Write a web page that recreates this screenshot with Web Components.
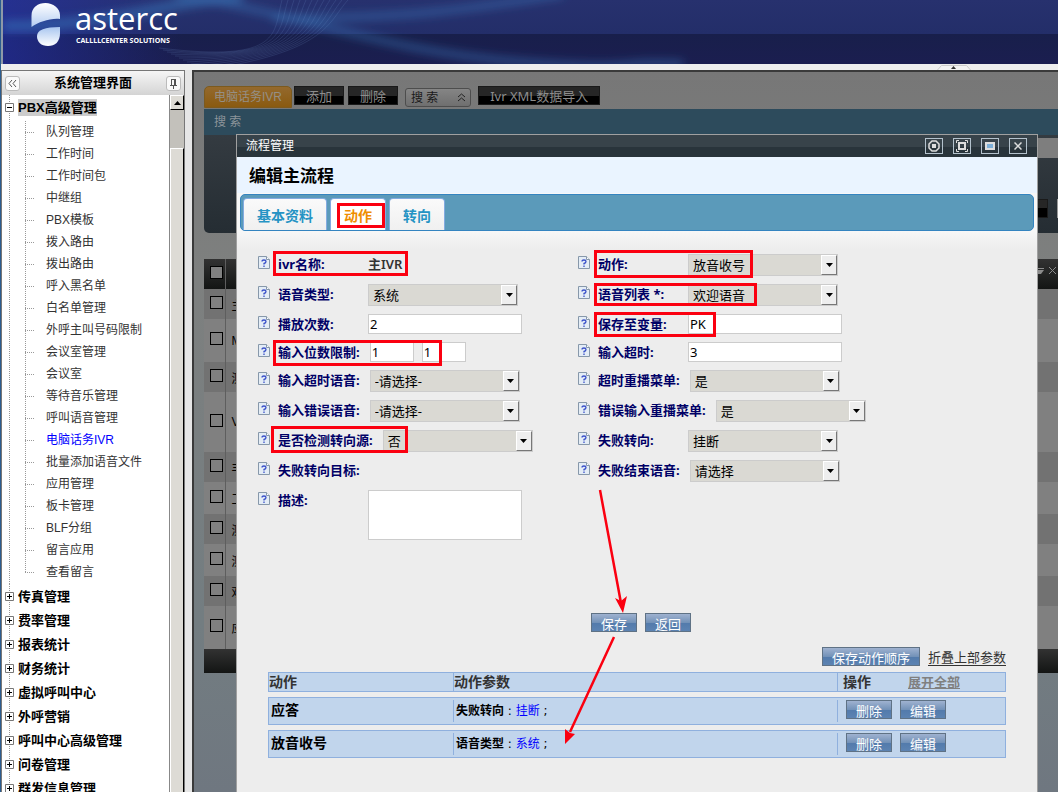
<!DOCTYPE html>
<html lang="zh-CN">
<head>
<meta charset="utf-8">
<title>astercc</title>
<style>
  body {
    margin: 0;
    background: #eeeeee;
    font-family: "Liberation Sans", "Noto Sans CJK SC", sans-serif;
    font-size: 12px;
    color: #333333;
  }
</style>
</head>
<body>
<app-shell>
  <brand-header slot="header"></brand-header>
  <side-menu slot="side" heading="系统管理界面"></side-menu>
  <work-pane slot="main">
    <flow-window heading="流程管理">
      <tab-strip heading="编辑主流程"></tab-strip>
      <flow-form></flow-form>
      <action-list></action-list>
      <mark-layer slot="marks"></mark-layer>
    </flow-window>
  </work-pane>
</app-shell>

<script>
// Attach an open shadow root and fill it from a template
function render(host, html) {
  const template = document.createElement("template");
  template.innerHTML = html;
  host.attachShadow({ mode: "open" });
  host.shadowRoot.appendChild(template.content.cloneNode(true));
}

class AppShell extends HTMLElement {
  constructor() {
    super();
    render(this, `
      <style>
        :host {
          display: flex;
          flex-direction: column;
          height: 100vh;
          box-sizing: border-box;
          border-left: 1px solid #2b5c8f;
          overflow: hidden;
        }
        .strip {
          display: flex;
          justify-content: flex-end;
          height: 6px;
          padding-right: 87px;
        }
        .strip button {
          border: 0;
          padding: 0;
          background: none;
          height: 6px;
          display: flex;
        }
        .body {
          flex: 1;
          min-height: 0;
          display: grid;
          grid-template-columns: 184px minmax(0, 1fr);
          gap: 7px;
          background: #e6e6e6;
        }
      </style>
      <slot name="header"></slot>
      <div class="strip">
        <button aria-label="toggle header">
          <svg width="34" height="6"><path d="M0.5 6L4.5 1.500H29.500L33.500 6" fill="#f3f3f3" stroke="#cccccc"/><path d="M14 5h5l-2.500-3z" fill="#333333"/></svg>
        </button>
      </div>
      <div class="body">
        <slot name="side"></slot>
        <slot name="main"></slot>
      </div>
    `);
  }
}

class BrandHeader extends HTMLElement {
  constructor() {
    super();
    // fine lines that fan out behind the logo
    let lines = "";
    for (let i = 0; i < 12; i++) {
      lines += `<path d="M${345 - i * 6} 0C${325 - i * 5} ${22 + i} ${325 - i * 4} ${52 + i} ${200 - i * 4} ${70 - i * 2}"/>`;
    }
    render(this, `
      <style>
        :host {
          display: grid;
          height: 64px;
          border-left: 2px solid #8e99a8;
          box-sizing: border-box;
          background: linear-gradient(#27316e 0, #232e69 34px, #181f4b 34px, #1b1e50 64px);
          overflow: hidden;
        }
        :host > * { grid-area: 1 / 1; }
        .brand {
          display: flex;
          align-items: flex-start;
          gap: 14px;
          padding: 2px 0 0 28px;
          color: #ffffff;
          font-family: "Open Sans", sans-serif;
        }
        .name { font-size: 31px; line-height: 32px; }
        .tagline { font-size: 7px; line-height: 14px; font-weight: 700; padding-left: 1px; }
      </style>
      <svg width="700" height="64">
        <defs>
          <filter id="soft"><feGaussianBlur stdDeviation="5"/></filter>
          <linearGradient id="left"><stop offset="0" stop-color="#2430a8" stop-opacity=".6"/><stop offset="1" stop-color="#2430a8" stop-opacity="0"/></linearGradient>
        </defs>
        <rect width="180" height="64" fill="url(#left)"/>
        <g fill="none" stroke="#3a7cc0" stroke-opacity=".55" filter="url(#soft)">
          <path d="M0 26C110 26 150 4 240 -4" stroke-width="10"/>
          <path d="M170 -6C300 14 380 52 520 62S600 60 680 64" stroke-width="6"/>
          <path d="M270 18C400 18 450 12 560 -6" stroke-width="6"/>
        </g>
        <g fill="none" stroke="#7f9fdc" stroke-opacity=".16">${lines}</g>
      </svg>
      <div class="brand">
        <svg width="30" height="46" viewBox="0 0 30 46">
          <defs><linearGradient id="g" x2="0" y2="1"><stop offset="0" stop-color="#ffffff"/><stop offset="1" stop-color="#b4cdf2"/></linearGradient>
          <linearGradient id="h" x2="0" y2="1"><stop offset="0" stop-color="#a9c6f0"/><stop offset="1" stop-color="#ffffff"/></linearGradient></defs>
          <path d="M0.500 25V14C0.500 5 7 1 14.500 1S29 6 29 13V17C19 16 8 20 0.500 25z" fill="url(#g)"/>
          <path d="M6 34C6 28 14 25 29 25V31C29 40 24 44 17 44S6 40 6 34z" fill="url(#h)"/>
        </svg>
        <div>
          <div class="name">astercc</div>
          <div class="tagline">CALLLLCENTER SOLUTIONS</div>
        </div>
      </div>
    `);
  }
}

const menuItems = [
  "队列管理", "工作时间", "工作时间包", "中继组", "PBX模板", "拨入路由", "拨出路由",
  "呼入黑名单", "白名单管理", "外呼主叫号码限制", "会议室管理", "会议室", "等待音乐管理",
  "呼叫语音管理", "电脑话务IVR", "批量添加语音文件", "应用管理", "板卡管理", "BLF分组",
  "留言应用", "查看留言"
];
const menuGroups = [
  "传真管理", "费率管理", "报表统计", "财务统计", "虚拟呼叫中心", "外呼营销",
  "呼叫中心高级管理", "问卷管理", "群发信息管理"
];

class SideMenu extends HTMLElement {
  constructor() {
    super();
    const box = (open) => `
      <svg width="9" height="9"><path d="M0.500 0.500h8v8h-8z" fill="#ffffff" stroke="#777777"/><path d="M2 4.500h5${open ? "" : "M4.500 2v5"}" stroke="#000000"/></svg>`;
    const items = menuItems.map((t) =>
      `<li><a href="#"${t === "电脑话务IVR" ? ' class="current"' : ""}>${t}</a></li>`).join("");
    const groups = menuGroups.map((t) => `<div class="group">${box(false)}<b>${t}</b></div>`).join("");
    render(this, `
      <style>
        :host {
          display: flex;
          flex-direction: column;
          min-height: 0;
          border: solid #777777;
          border-width: 1px 1px 0;
          background: #ffffff;
          color: #000000;
        }
        header {
          display: flex;
          align-items: center;
          justify-content: space-between;
          height: 24px;
          padding: 0 3px;
          background: linear-gradient(#f6f6f6, #d4d4d4);
        }
        h2 { margin: 0; font-size: 13px; line-height: 20px; }
        header button {
          width: 15px;
          height: 15px;
          padding: 0;
          border: 1px solid #bbbbbb;
          border-radius: 3px;
          background: #fafafa;
          display: flex;
          align-items: center;
          justify-content: center;
        }
        .body { flex: 1; min-height: 0; display: flex; }
        nav { flex: 1; overflow: hidden; }
        .group {
          display: flex;
          align-items: center;
          height: 24px;
          padding-left: 3px;
          background: repeating-linear-gradient(#999999 0 1px, transparent 1px 2px) 7px 0 / 1px 100% no-repeat;
        }
        .group b { margin-left: 4px; font-size: 13px; line-height: 17px; white-space: nowrap; }
        .open b { background: #cccccc; }
        ul {
          list-style: none;
          margin: 0;
          padding: 2px 0 1px 23px;
          background: repeating-linear-gradient(#999999 0 1px, transparent 1px 2px) 7px 0 / 1px 100% no-repeat;
        }
        li {
          height: 22px;
          display: flex;
          align-items: center;
          padding-left: 21px;
          background:
            repeating-linear-gradient(#999999 0 1px, transparent 1px 2px) 0 0 / 1px 100% no-repeat,
            repeating-linear-gradient(90deg, #999999 0 1px, transparent 1px 2px) 0 11px / 9px 1px no-repeat;
        }
        li:last-child { background-size: 1px 11px, 9px 1px; }
        li a { color: #333333; text-decoration: none; line-height: 18px; white-space: nowrap; }
        li a.current { color: #0000ff; }
        .scroll {
          width: 15px;
          box-sizing: border-box;
          border-left: 1px solid #888888;
          background: #c3c1bb;
          display: flex;
          flex-direction: column;
        }
        .scroll button {
          height: 15px;
          padding: 0;
          background: #dddbd5;
          border: 1px solid;
          border-color: #ffffff #000000 #000000 #ffffff;
          display: flex;
          align-items: center;
          justify-content: center;
        }
        .thumb {
          flex: 1;
          margin-top: 38px;
          background: #dddbd5;
          border: solid;
          border-width: 1px 1px 0 1px;
          border-color: #ffffff #000000 #000000 #ffffff;
        }
      </style>
      <header>
        <button aria-label="collapse"><svg width="9" height="9" fill="none" stroke="#555555"><path d="M4 1L1 4.500L4 8M8 1L5 4.500L8 8"/></svg></button>
        <h2>${this.getAttribute("heading")}</h2>
        <button aria-label="pin"><svg width="9" height="11" fill="none" stroke="#555555"><path d="M2.500 1v6M6.500 1v6M5.500 1v6M2 1.500h5M1 7.500h7M4.500 8v3"/></svg></button>
      </header>
      <div class="body">
        <nav>
          <div class="group open">${box(true)}<b>PBX高级管理</b></div>
          <ul>${items}</ul>
          ${groups}
        </nav>
        <div class="scroll">
          <button aria-label="scroll up"><svg width="7" height="4"><path d="M0 4h7L3.500 0z"/></svg></button>
          <div class="thumb"></div>
        </div>
      </div>
    `);
  }
}

// rows of the dimmed list: first letter of the name, row height
const listRows = [
  ["主", 30], ["M", 43], ["测", 30], ["V", 60], ["丰", 30],
  ["工", 32], ["测", 30], ["测", 32], ["欢", 30], ["应", 43]
];

class WorkPane extends HTMLElement {
  constructor() {
    super();
    const rows = listRows.map(([t, h]) => `
      <tr style="height: ${h}px"><td><input type="checkbox" aria-label="${t}"></td><td>${t}</td></tr>`).join("");
    render(this, `
      <style>
        :host {
          display: block;
          position: relative;
          min-height: 0;
          overflow: hidden;
          border: solid #3a3a3a;
          border-width: 2px 0 0 2px;
          padding: 14px 0 0 10px;
          background: linear-gradient(#777777, #7e807f 200px, #737d81 550px, #6f7780);
        }
        .bar { display: flex; align-items: flex-start; gap: 4px; }
        .bar button {
          height: 19px;
          padding: 0 11px;
          border: 1px solid #1a1a1a;
          background: linear-gradient(#262626 0 50%, #000000 50%);
          color: #8c8c8c;
          font: 13px/19px "Noto Sans", "Noto Sans CJK SC", sans-serif;
          white-space: nowrap;
        }
        .bar button.tab {
          height: 22px;
          margin-right: -2px;
          padding: 0 9px;
          border: 1px solid #7c5a1e;
          border-radius: 5px 5px 0 0;
          background: linear-gradient(#94692d, #8a5a10);
          color: #958f85;
          font: 12px/20px "Liberation Sans", "Noto Sans CJK SC", sans-serif;
        }
        .bar button.find {
          display: flex;
          align-items: center;
          gap: 19px;
          margin: 2px 3px 0;
          padding: 0 4px 0 5px;
          border: 1px solid #4d4d4d;
          border-radius: 3px;
          background: linear-gradient(#858585, #6f6f6f);
          color: #1a1a1a;
          font-size: 12px;
        }
        .title {
          margin-top: 1px;
          height: 26px;
          line-height: 26px;
          padding-left: 10px;
          background: #2d4b5c;
          color: #8c949a;
          font-size: 12px;
        }
        .search {
          height: 98px;
          box-sizing: border-box;
          padding: 3px 0 15px 40px;
          display: flex;
          flex-direction: column;
          justify-content: space-between;
          background: linear-gradient(#343b41, #252d33);
          border-bottom-left-radius: 5px;
        }
        .search i { display: block; height: 20px; background: #7e7e7e; }
        .search div { display: flex; justify-content: flex-end; gap: 9px; }
        .search button {
          width: 60px;
          height: 19px;
          border: 1px solid #1a1a1a;
          background: linear-gradient(#262626 0 50%, #000000 50%);
        }
        .search span { width: 1px; background: #999999; }
        table { width: 100%; margin-top: 26px; border-collapse: collapse; }
        td, th { padding: 0; text-align: left; font-weight: 400; color: #000000; }
        td:first-child, th:first-child { width: 21px; padding-left: 6px; box-sizing: border-box; border-right: 1px solid #5e5e5e; }
        td:last-child, th:last-child { padding-left: 6px; }
        thead tr { height: 30px; background: linear-gradient(#323232, #131514); }
        thead svg { display: block; margin-left: auto; }
        tbody tr { background: #808080; }
        tbody tr:nth-child(odd) { background: #727272; }
        input {
          appearance: none;
          display: block;
          width: 13px;
          height: 13px;
          margin: 0 0 4px;
          border: 1px solid #000000;
          background: #808080;
        }
        .foot { height: 24px; background: linear-gradient(#323232, #131514); }
      </style>
      <div class="bar">
        <button class="tab">电脑话务IVR</button>
        <button>添加</button>
        <button>删除</button>
        <button class="find">搜 索 <svg width="9" height="9" fill="none" stroke="#222222"><path d="M1 4L4.500 1L8 4M1 8L4.500 5L8 8"/></svg></button>
        <button>Ivr XML数据导入</button>
      </div>
      <div class="title">搜 索</div>
      <div class="search"><i></i><div><button aria-label="search"></button><span></span></div></div>
      <table>
        <thead><tr>
          <th><input type="checkbox" aria-label="all"></th>
          <th><svg width="20" height="16" fill="none" stroke="#8c8c8c"><path d="M0 2.500h6M11 1l7 7M18 1L11 8"/><path d="M0 4h6l-3 4H0z" fill="#8c8c8c" stroke="none"/></svg></th>
        </tr></thead>
        <tbody>${rows}</tbody>
      </table>
      <div class="foot"></div>
      <slot></slot>
    `);
  }
}

class FlowWindow extends HTMLElement {
  constructor() {
    super();
    render(this, `
      <style>
        /* floats over the list */
        :host {
          display: block;
          position: absolute;
          top: 62px;
          left: 42px;
          right: 20px;
          bottom: 0;
          border: solid #a0a0a0;
          border-width: 1px 1px 0;
          background: #ededed;
          overflow: hidden;
        }
        header {
          display: flex;
          align-items: center;
          justify-content: space-between;
          height: 22px;
          padding: 0 10px 0 9px;
          background: linear-gradient(#38434a 0 55%, #29343b 55%);
          color: #ffffff;
        }
        h1 { margin: 0; font-size: 12px; line-height: 20px; font-weight: 400; }
        .tools { display: flex; gap: 10px; }
        .tools button {
          width: 18px;
          height: 16px;
          padding: 0;
          border: 1px solid #b4c2cd;
          background: none;
          display: flex;
          align-items: center;
          justify-content: center;
        }
        svg { fill: none; stroke: #dddddd; }
      </style>
      <header>
        <h1>${this.getAttribute("heading")}</h1>
        <div class="tools">
          <button aria-label="restore"><svg width="12" height="12"><path d="M4 1h4L11 4v4L8 11H4L1 8V4z" stroke-width="1.500"/><path d="M4 4h4v4H4z" fill="#dddddd" stroke="none"/></svg></button>
          <button aria-label="maximize"><svg width="12" height="12"><path d="M3 3h6v6H3z" stroke-width="2"/><path d="M0.500 3V0.500H3M9 0.500h2.500V3M11.500 9v2.500H9M3 11.500H0.500V9"/></svg></button>
          <button aria-label="minimize"><svg width="12" height="8"><path d="M2 1h8v6H2z" fill="#7fb0d8" stroke-width="2"/></svg></button>
          <button aria-label="close"><svg width="8" height="8"><path d="M0.500 0.500l7 7M7.500 0.500l-7 7" stroke-width="1.500"/></svg></button>
        </div>
      </header>
      <slot></slot>
      <slot name="marks"></slot>
    `);
  }
}

class TabStrip extends HTMLElement {
  constructor() {
    super();
    render(this, `
      <style>
        :host { display: block; background: #eaf4ff; }
        h2 {
          margin: 0;
          height: 36px;
          line-height: 40px;
          padding-left: 12px;
          font-size: 17px;
          color: #000000;
        }
        .wrap { padding: 1px 3px 0; background: #f7f7f7; }
        .tabs {
          display: flex;
          align-items: flex-end;
          gap: 3px;
          height: 35px;
          padding-left: 2px;
          border: 1px solid #3484c0;
          border-radius: 5px;
          background: #5b9aba;
        }
        button {
          height: 32px;
          padding: 0 13px;
          border: 1px solid #83abe0;
          border-bottom: 0;
          border-radius: 4px 4px 0 0;
          background: linear-gradient(#fafafa, #f0f0f0);
          color: #2593c4;
          font: 700 14px/30px "Noto Sans CJK SC", sans-serif;
        }
        button.on { background: #ffffff; color: #ef8d00; }
      </style>
      <h2>${this.getAttribute("heading")}</h2>
      <div class="wrap">
        <div class="tabs">
          <button>基本资料</button>
          <button class="on">动作</button>
          <button>转向</button>
        </div>
      </div>
    `);
  }
}

class FormRow extends HTMLElement {
  constructor() {
    super();
    const label = this.getAttribute("label");
    const type = this.getAttribute("type");
    const value = this.getAttribute("value") || "";
    let field = "";
    if (type === "select") {
      field = `
        <div class="select">
          <select id="f"><option>${value}</option></select>
          <span><svg width="7" height="4"><path d="M0 0h7L3.500 4z"/></svg></span>
        </div>`;
    } else if (type === "text") {
      field = `<input id="f" type="text" value="${value}">`;
    } else if (type === "range") {
      field = value.split(",").map((v, i) =>
        `<input class="short" id="${i ? "g" : "f"}" type="text" aria-label="${label}" value="${v}">`).join("");
    } else if (type === "area") {
      field = `<textarea id="f"></textarea>`;
    } else {
      field = `<output id="f">${value}</output>`;
    }
    render(this, `
      <style>
        :host {
          display: flex;
          align-items: flex-start;
          font-family: "Noto Sans", "Noto Sans CJK SC", sans-serif;
          font-size: 13px;
        }
        .help { flex: none; margin: 2px 8px 0 0; }
        label {
          min-width: 90px;
          box-sizing: border-box;
          padding-right: 10px;
          line-height: 20px;
          font-weight: 700;
          color: #000066;
          white-space: nowrap;
        }
        .select { display: grid; width: 150px; height: 22px; }
        .select > * { grid-area: 1 / 1; }
        select, input, textarea {
          box-sizing: border-box;
          border: 1px solid #cccccc;
          font: inherit;
          color: #000000;
        }
        select {
          appearance: none;
          width: 150px;
          padding: 0 0 0 4px;
          background: #dad9d3;
          border-radius: 0;
        }
        .select span {
          width: 14px;
          height: 18px;
          margin: 1px 1px 0 0;
          justify-self: end;
          pointer-events: none;
          box-sizing: content-box;
          border: 1px solid;
          border-color: #ffffff #777777 #777777 #ffffff;
          background: #eeeeee;
          display: flex;
          align-items: center;
          justify-content: center;
        }
        input { width: 154px; height: 20px; padding: 0 1px; background: #ffffff; }
        .short { width: 44px; }
        .short + .short { margin-left: 8px; }
        textarea { width: 154px; height: 50px; resize: none; background: #ffffff; display: block; }
        output { min-height: 22px; line-height: 20px; font-weight: 600; }
      </style>
      <svg class="help" width="12" height="13" fill="none"><path d="M0.500 0.500h8l3 3v9h-11z" fill="#e4edf6" stroke="#8798aa"/><path d="M8.500 0.500v3h3" fill="#ffffff" stroke="#8798aa"/><path d="M4 5.500Q4 4 6 4T8 5.500T6 7.500V8.500M6 9.500V11" stroke="#3a50c8" stroke-width="1.300"/></svg>
      <label for="f">${label}</label>
      ${field}
    `);
  }
}

class PushButton extends HTMLElement {
  constructor() {
    super();
    render(this, `
      <style>
        :host { display: block; }
        button {
          display: block;
          height: 19px;
          padding: 0 9px;
          border: 1px solid #5f7285;
          background: linear-gradient(#9fb2d0, #7392b8 50%, #527aab 50%, #5c83b2);
          color: #ffffff;
          font: 13px/19px "Noto Sans CJK SC", sans-serif;
          white-space: nowrap;
        }
      </style>
      <button><slot></slot></button>
    `);
  }
}

const leftFields = [
  ["ivr名称:", "static", "主IVR"],
  ["语音类型:", "select", "系统"],
  ["播放次数:", "text", "2"],
  ["输入位数限制:", "range", "1,1"],
  ["输入超时语音:", "select", "-请选择-"],
  ["输入错误语音:", "select", "-请选择-"],
  ["是否检测转向源:", "select", "否"],
  ["失败转向目标:", "static", ""],
  ["描述:", "area", ""]
];
const rightFields = [
  ["动作:", "select", "放音收号"],
  ["语音列表 *:", "select", "欢迎语音"],
  ["保存至变量:", "text", "PK"],
  ["输入超时:", "text", "3"],
  ["超时重播菜单:", "select", "是"],
  ["错误输入重播菜单:", "select", "是"],
  ["失败转向:", "select", "挂断"],
  ["失败结束语音:", "select", "请选择"]
];

class FlowForm extends HTMLElement {
  constructor() {
    super();
    const column = (fields) => fields.map(([label, type, value]) =>
      `<form-row label="${label}" type="${type}" value="${value}"></form-row>`).join("");
    render(this, `
      <style>
        :host {
          display: block;
          padding: 23px 21px 0;
          background: linear-gradient(#f7f7f7, #ededed 18px);
        }
        .columns { display: grid; grid-template-columns: 320px 1fr; }
        .columns > div { display: flex; flex-direction: column; gap: 8px; }
        .buttons { display: flex; justify-content: center; gap: 8px; padding: 73px 0 0 8px; }
      </style>
      <div class="columns">
        <div>${column(leftFields)}</div>
        <div>${column(rightFields)}</div>
      </div>
      <div class="buttons">
        <push-button>保存</push-button>
        <push-button>返回</push-button>
      </div>
    `);
  }
}

class ActionList extends HTMLElement {
  constructor() {
    super();
    const row = (name, key, value) => `
      <tr>
        <td class="name">${name}</td>
        <td><div><b>${key}</b> : <a href="#">${value}</a> ;</div></td>
        <td><div class="ops"><push-button>删除</push-button><push-button>编辑</push-button></div></td>
      </tr>`;
    render(this, `
      <style>
        :host {
          display: block;
          padding: 15px 31px 0;
          font-family: "DejaVu Sans", "Noto Sans CJK SC", sans-serif;
        }
        .top { display: flex; justify-content: flex-end; gap: 8px; }
        .top a { font-size: 13px; line-height: 21px; height: 18px; color: #333333; text-decoration: none; border-bottom: 1px solid #333333; }
        table {
          width: 100%;
          margin-top: 1px;
          table-layout: fixed;
          border-collapse: separate;
          border-spacing: 0 5px;
          color: #000000;
        }
        th, td {
          box-sizing: border-box;
          padding: 0;
          text-align: left;
          vertical-align: top;
          background: #c1d5ec;
          border: solid #8fb0de;
          border-width: 1px 0;
        }
        th { height: 20px; font-size: 14px; line-height: 18px; color: #333333; }
        th + th { border-left-width: 1px; }
        tr > :first-child { border-left-width: 1px; }
        tr > :last-child { border-right-width: 1px; }
        th:nth-child(1) { width: 185px; }
        th:nth-child(3) { width: 169px; padding-left: 5px; }
        th a { margin-left: 37px; font-size: 13px; line-height: 13px; color: #808080; }
        td { height: 28px; font-size: 12px; }
        td div {
          height: 22px;
          line-height: 22px;
          margin-top: 2px;
          padding-left: 2px;
          border-left: 1px solid #8fb0de;
        }
        td a { color: #0000ff; text-decoration: none; }
        .name { padding-left: 2px; font-size: 14px; line-height: 24px; font-weight: 700; }
        td .ops { display: flex; gap: 8px; padding-left: 8px; }
      </style>
      <div class="top">
        <push-button>保存动作顺序</push-button>
        <a href="#">折叠上部参数</a>
      </div>
      <table>
        <thead><tr><th>动作</th><th>动作参数</th><th>操作<a href="#">展开全部</a></th></tr></thead>
        <tbody>
          ${row("应答", "失败转向", "挂断")}
          ${row("放音收号", "语音类型", "系统")}
        </tbody>
      </table>
    `);
  }
}

// Red frames and arrows drawn over the window
class MarkLayer extends HTMLElement {
  constructor() {
    super();
    render(this, `
      <style>
        :host { display: block; position: absolute; inset: 0; pointer-events: none; }
        svg { display: block; width: 100%; height: 100%; fill: none; stroke: #fb0010; stroke-width: 3; }
        polygon { fill: #fb0010; stroke: none; }
      </style>
      <svg>
        <rect x="101.5" y="69.5" width="45" height="22"/>
        <rect x="37.5" y="117.5" width="132" height="22"/>
        <rect x="37.5" y="206.5" width="166" height="23"/>
        <rect x="35.5" y="292.5" width="134" height="24"/>
        <rect x="358.5" y="116.5" width="156" height="25"/>
        <rect x="358.5" y="149.5" width="160" height="20"/>
        <rect x="358.5" y="178.5" width="119" height="22"/>
        <path d="M363 355L384 468M377 502L333 597" stroke-width="2.500"/>
        <polygon points="386,478 378,463 384,466 390,461"/>
        <polygon points="328,609 328,594 333,598 338,599"/>
      </svg>
    `);
  }
}

window.customElements.define("push-button", PushButton);
window.customElements.define("form-row", FormRow);
window.customElements.define("flow-form", FlowForm);
window.customElements.define("action-list", ActionList);
window.customElements.define("tab-strip", TabStrip);
window.customElements.define("mark-layer", MarkLayer);
window.customElements.define("flow-window", FlowWindow);
window.customElements.define("work-pane", WorkPane);
window.customElements.define("side-menu", SideMenu);
window.customElements.define("brand-header", BrandHeader);
window.customElements.define("app-shell", AppShell);
</script>
</body>
</html>
